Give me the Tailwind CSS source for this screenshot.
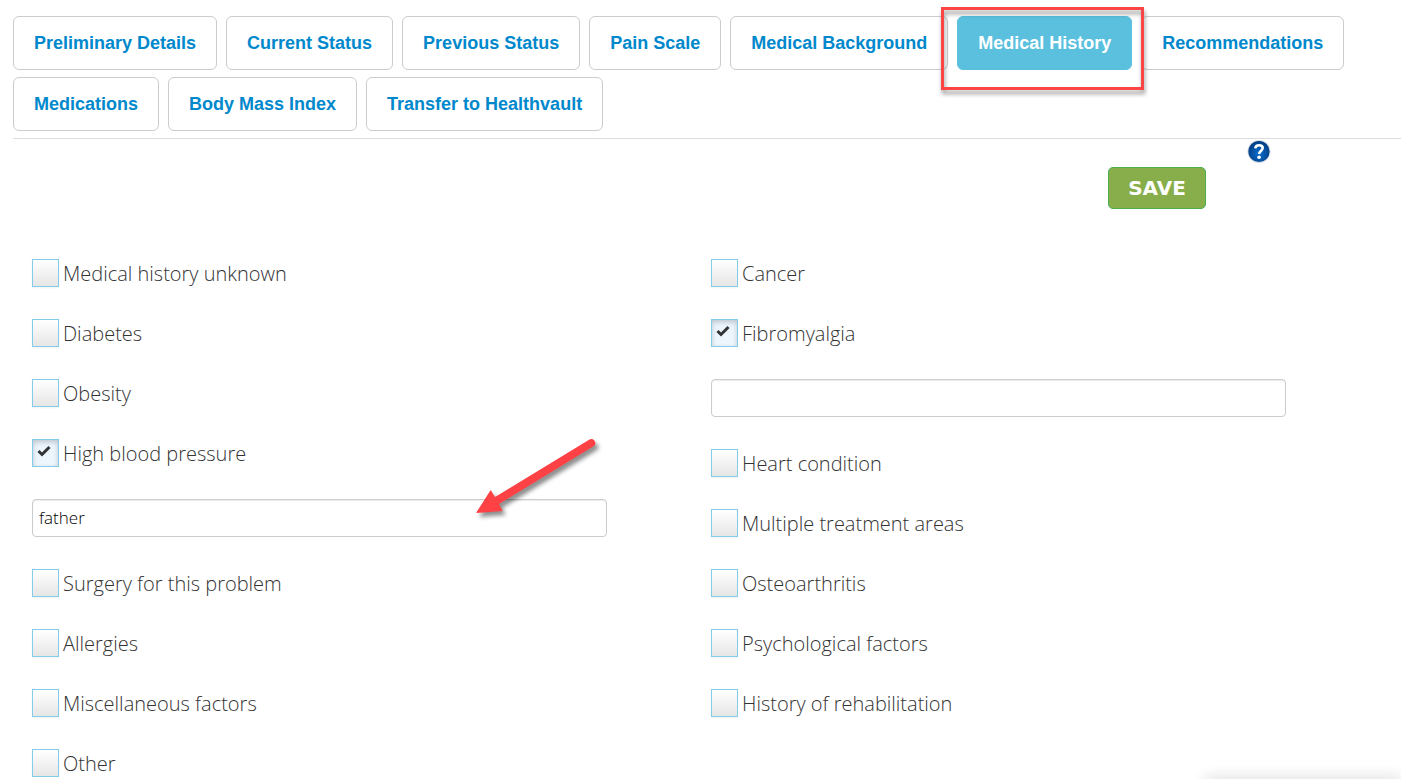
<!DOCTYPE html>
<html lang="en">
<head>
  <meta charset="UTF-8">
  <meta name="viewport" content="width=device-width, initial-scale=1.0">
  <title>Medical History</title>
  <script src="https://cdn.jsdelivr.net/npm/@tailwindcss/browser@4"></script>
</head>
<body class="bg-white text-[#333] overflow-x-hidden">
  <nav class="ml-[13px] pt-4 pb-[7px] border-b border-[#ddd]">
    <ul class="flex flex-wrap gap-x-[9px] gap-y-[7px] font-['Liberation_Sans',Arial,sans-serif] font-bold text-[18px] leading-[52px] text-[#08c]">
      <li><a href="#" class="block px-5 border border-[#ccc] rounded-md">Preliminary Details</a></li>
      <li><a href="#" class="block px-5 border border-[#ccc] rounded-md">Current Status</a></li>
      <li><a href="#" class="block px-5 border border-[#ccc] rounded-md">Previous Status</a></li>
      <li><a href="#" class="block px-5 border border-[#ccc] rounded-md">Pain Scale</a></li>
      <li><a href="#" class="block px-5 border border-[#ccc] rounded-md">Medical Background</a></li>
      <li class="relative">
        <a href="#" aria-current="page" class="block px-5 border border-[#5bc0de] rounded-md bg-[#5bc0de] text-white">Medical History</a>
        <span class="absolute z-10 -top-[9px] -bottom-5 -left-4 -right-3 border-3 border-[#fa4446] drop-shadow-[1px_4px_2px_rgba(0,0,0,0.4)] pointer-events-none"></span>
      </li>
      <li><a href="#" class="block px-5 border border-[#ccc] rounded-md">Recommendations</a></li>
      <li><a href="#" class="block px-5 border border-[#ccc] rounded-md">Medications</a></li>
      <li><a href="#" class="block px-5 border border-[#ccc] rounded-md">Body Mass Index</a></li>
      <li><a href="#" class="block px-5 border border-[#ccc] rounded-md">Transfer to Healthvault</a></li>
    </ul>
  </nav>

  <form>
    <div class="flex justify-end pr-[130px]">
      <button type="button" aria-label="Help">
        <svg class="block w-6 h-6" viewBox="0 0 24 24">
          <defs>
            <radialGradient id="help-fill" cx="50%" cy="60%" r="55%">
              <stop offset="0" stop-color="#0a6fd0"/>
              <stop offset="1" stop-color="#023f85"/>
            </radialGradient>
          </defs>
          <circle cx="12" cy="12.500" r="11.500" fill="#d5dbe2"/>
          <circle cx="12" cy="12.500" r="10.600" fill="url(#help-fill)"/>
          <path d="M8.300 9.400c.200-2.200 1.700-3.200 3.700-3.200 2.100 0 3.700 1.100 3.700 2.900 0 2.500-3.500 2.700-3.500 5.900" fill="none" stroke="#fff" stroke-width="2.600"/>
          <circle cx="12.100" cy="18.300" r="1.800" fill="#fff"/>
        </svg>
      </button>
    </div>
    <div class="flex justify-end pr-[195px] mt-1">
      <button type="submit" class="w-[98px] h-[42px] rounded-[5px] border border-[#4cae4c] bg-[#87ae4a] text-white font-['DejaVu_Sans',Verdana,sans-serif] font-bold text-[20px] leading-[40px]">SAVE</button>
    </div>

    <div class="grid grid-cols-2 mt-[50px] pl-8 pr-[11px] font-['Open_Sans',sans-serif] font-light text-[20px]">
      <div id="history-left" class="flex flex-col gap-8 pr-[104px]"></div>
      <div id="history-right" class="flex flex-col gap-8 pr-[104px]"></div>
    </div>
  </form>

  <!-- edge of the docked panel -->
  <div class="fixed right-0 -bottom-1 w-[196px] h-1 shadow-[0_0_14px_rgba(0,0,0,0.3)]"></div>

  <script>
    const left = [
      { name: "Medical history unknown" },
      { name: "Diabetes" },
      { name: "Obesity" },
      { name: "High blood pressure", checked: true, note: "father", arrow: true },
      { name: "Surgery for this problem" },
      { name: "Allergies" },
      { name: "Miscellaneous factors" },
      { name: "Other" }
    ];
    const right = [
      { name: "Cancer" },
      { name: "Fibromyalgia", checked: true, note: "" },
      { name: "Heart condition" },
      { name: "Multiple treatment areas" },
      { name: "Osteoarthritis" },
      { name: "Psychological factors" },
      { name: "History of rehabilitation" }
    ];

    const arrow = `
      <svg class="absolute right-0 -top-16 w-[140px] h-24 overflow-visible pointer-events-none drop-shadow-[3px_4px_2px_rgba(0,0,0,0.45)]" viewBox="467 435 140 96">
        <path d="M476 513 L490.700 490 L495 497 L589.500 439.500 A4 4 0 0 1 594 446 L499 504 L502.600 511 Z" fill="#fd4144"/>
      </svg>`;

    function render(id, items) {
      document.getElementById(id).innerHTML = items.map(item => `
        <label class="flex gap-1 self-start h-7 leading-[30px]">
          <span class="relative block w-[27px] h-7">
            <input type="checkbox" ${item.checked ? "checked" : ""} class="peer block appearance-none w-[27px] h-7 border border-[#84cdea] bg-linear-to-b from-white to-[#e6e6e6] shadow-[0_1px_2px_rgba(0,0,0,0.05)] checked:from-[#eaf4fd] checked:to-[#eff6fd] checked:shadow-[inset_0_2px_5px_rgba(0,0,0,0.2)]">
            <svg class="absolute left-[5px] top-[5px] w-[14px] h-[14px] hidden peer-checked:block pointer-events-none" viewBox="0 0 14 14">
              <path d="M1.500 7 L5 10.500 L12.500 3" fill="none" stroke="#333" stroke-width="3"/>
            </svg>
          </span>
          <span>${item.name}</span>
        </label>
        ${item.note === undefined ? "" : `
        <div class="relative">
          <input type="text" value="${item.note}" aria-label="${item.name} details" class="block w-full h-[38px] px-[6px] pb-[2px] border border-[#ccc] rounded bg-white font-light text-[17px] text-black shadow-[inset_0_1px_1px_rgba(0,0,0,0.08)]">
          ${item.arrow ? arrow : ""}
        </div>`}
      `).join("");
    }

    render("history-left", left);
    render("history-right", right);
  </script>
</body>
</html>
